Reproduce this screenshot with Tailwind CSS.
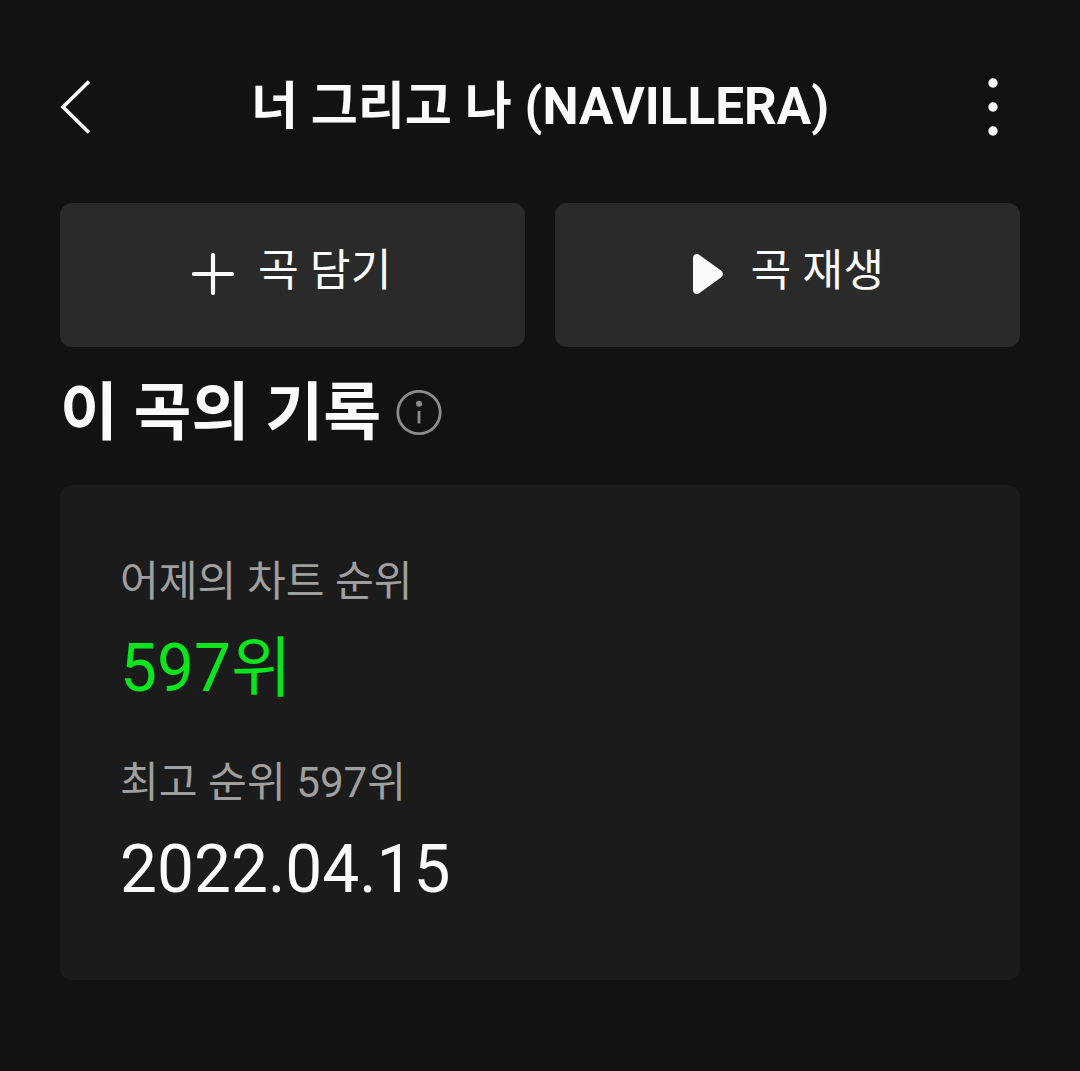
<!DOCTYPE html>
<html lang="ko">
<head>
<meta charset="utf-8">
<title>너 그리고 나 (NAVILLERA)</title>
<script src="https://cdn.jsdelivr.net/npm/@tailwindcss/browser@4"></script>
</head>
<body class="bg-[#121212]">
<div class="flex h-[1071px] w-[1080px] flex-col bg-[#121212] px-[60px] font-[Roboto,'Noto_Sans_CJK_KR',sans-serif] text-[#fafafa]">
  <header class="mt-[66px] flex h-[80px] items-center justify-between">
    <button aria-label="뒤로" class="h-[60px] w-[60px]"><svg class="h-[60px] w-[60px]" viewBox="0 0 60 60" fill="none" stroke="#fafafa" stroke-width="3.6"><path d="M29 5.500L3 31L29 56.500"/></svg></button>
    <h1 class="pt-[2px] text-[51.2px] leading-[80px] font-bold whitespace-nowrap">너 그리고 나 (NAVILLERA)</h1>
    <button aria-label="더보기" class="h-[60px] w-[60px]"><svg class="h-[60px] w-[60px]" viewBox="0 0 60 60" fill="#fafafa"><circle cx="33" cy="7" r="4.700"/><circle cx="33" cy="31" r="4.700"/><circle cx="33" cy="55" r="4.700"/></svg></button>
  </header>
  <div class="mt-[57px] grid grid-cols-2 gap-[30px]">
    <button class="flex h-[144px] items-center rounded-[12px] bg-[#2a2a2a] pb-[2px] pl-[132px]">
      <svg class="h-[42px] w-[42px]" viewBox="0 0 42 42" stroke="#fafafa" stroke-width="4.200" stroke-linecap="round"><path d="M2 21H40M21 2V40"/></svg>
      <span class="ml-[24px] pb-[6px] text-[44.4px] leading-[60px]">곡 담기</span>
    </button>
    <button class="flex h-[144px] items-center rounded-[12px] bg-[#2a2a2a] pb-[2px] pl-[138px]">
      <svg class="h-[42px] w-[32px]" viewBox="0 0 32 42" fill="#fafafa"><path d="M0 5C0 1.500 3.500 -0.200 6.500 2L28 17.500Q32 21 28 24.500L6.500 40C3.500 42.200 0 40.500 0 37Z"/></svg>
      <span class="ml-[25.500px] pb-[6px] text-[44.4px] leading-[60px]">곡 재생</span>
    </button>
  </div>
  <div class="mt-[26px] flex h-[80px] items-center">
    <h2 class="text-[63px] leading-[80px] font-bold whitespace-nowrap">이 곡의 기록</h2>
    <svg class="ml-[15px] h-[46px] w-[46px]" viewBox="0 0 46 46" fill="none" stroke="#8c8c8c" stroke-width="2.800"><circle cx="23" cy="22.500" r="21.200"/><path d="M23 21V33.500"/><circle cx="23" cy="13.800" r="3" fill="#8c8c8c" stroke="none"/></svg>
  </div>
  <section class="mt-[32px] flex h-[495px] flex-col rounded-[12px] bg-[#1b1b1b] px-[60px] pt-[62px]">
    <p class="text-[42.2px] leading-[70px] text-[#9f9f9f]">어제의 차트 순위</p>
    <p class="mt-[2px] text-[65.8px] leading-[100px] text-[#0ae61e]">597위</p>
    <p class="mt-[29px] text-[42.2px] leading-[70px] text-[#9f9f9f]">최고 순위 597위</p>
    <p class="mt-[2px] text-[65.8px] leading-[100px]">2022.04.15</p>
  </section>
</div>
</body>
</html>
